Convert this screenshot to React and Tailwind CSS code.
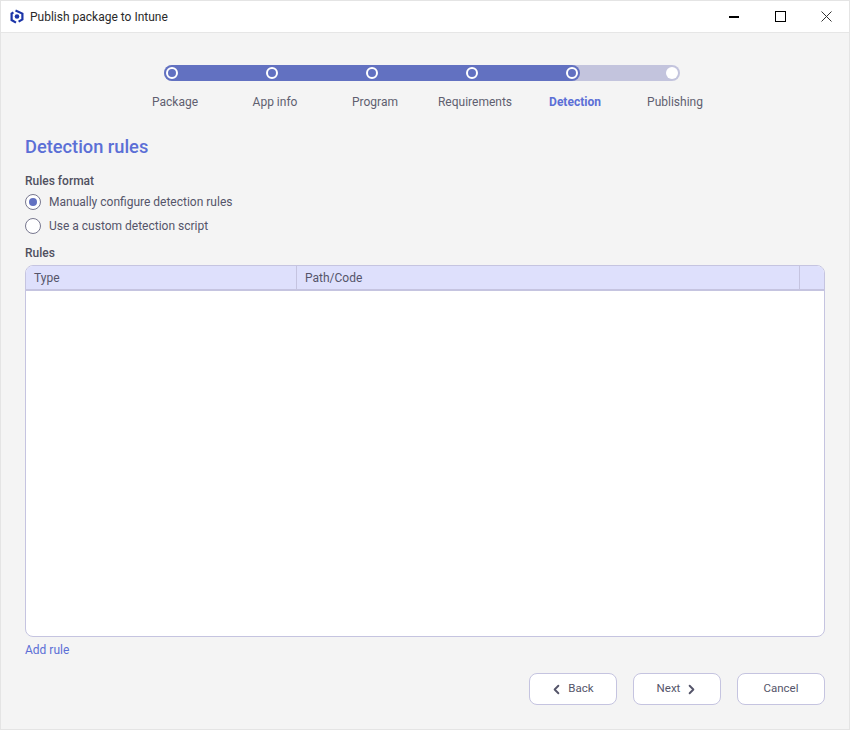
import React from 'react';
import { ChevronLeft, ChevronRight } from 'lucide-react';

const steps = ['Package', 'App info', 'Program', 'Requirements', 'Detection', 'Publishing'];

const Logo = () => (
  <svg width="14" height="15" viewBox="0 0 14 15" fill="none">
    <path d="M5.5 1.6 L12.4 4.6 L12.4 10.4 L8.6 12.6" stroke="#1c35a8" strokeWidth="2.2" />
    <path d="M6 13.6 L1.6 11 L1.6 4.6 L3.4 3.4" stroke="#1c35a8" strokeWidth="2.2" />
    <circle cx="7" cy="7.5" r="2.3" fill="#1c35a8" />
  </svg>
);

const Stepper = () => (
  <div className="flex flex-col">
    <div className="ml-[163px] flex h-4 w-[516px] rounded-full bg-[#c3c4dd]">
      <div className="flex h-4 w-[416px] items-center gap-[88px] rounded-full bg-[#6271c1] pl-[2px]">
        {steps.slice(0, 5).map((s) => (
          <span key={s} className="h-3 w-3 shrink-0 rounded-full border-2 border-white bg-[#6271c1]" />
        ))}
      </div>
      <div className="flex flex-1 items-center justify-end pr-[2px]">
        <span className="h-3 w-3 rounded-full bg-white" />
      </div>
    </div>
    <div className="ml-[124px] mt-[13px] flex">
      {steps.map((s, i) => (
        <div key={s} className={`w-[100px] text-center leading-4 ${i === 4 ? 'font-bold text-[#5b6fd6]' : 'text-[#5f5f70]'}`}>
          {s}
        </div>
      ))}
    </div>
  </div>
);

const Radio = ({ checked, label }) => (
  <label className="flex h-6 items-center gap-2 text-[#55556a]">
    <span className="flex h-4 w-4 items-center justify-center rounded-full border border-[#77778f] bg-white">
      {checked && <span className="h-2 w-2 rounded-full bg-[#6271c1]" />}
    </span>
    {label}
  </label>
);

const Button = ({ children, className }) => (
  <button className={`flex h-8 w-[88px] items-center justify-center gap-1 rounded-lg border border-[#c5c4e0] bg-white text-[11.5px] text-[#55556a] ${className || ''}`}>
    {children}
  </button>
);

export default function App() {
  return (
    <div className="flex h-[730px] w-[850px] flex-col border border-[#e4e4e4] bg-[#f4f4f4] text-[12px] [font-family:Roboto,sans-serif]">
      <div className="flex h-[32px] shrink-0 items-center border-b border-[#e6e6e6] bg-white">
        <div className="ml-[9px] mr-[6px] flex"><Logo /></div>
        <span className="pt-px text-[#2a2a2a]">Publish package to Intune</span>
        <div className="ml-auto flex items-center">
          <div className="flex w-[46px] justify-center"><span className="h-[2px] w-[10px] bg-black" /></div>
          <div className="flex w-[46px] justify-center"><span className="h-[11px] w-[11px] border border-black" /></div>
          <div className="flex w-[46px] justify-center">
            <svg width="11" height="11" viewBox="0 0 11 11" stroke="#333" strokeWidth="1"><path d="M.5.5l10 10M10.5.5l-10 10" /></svg>
          </div>
        </div>
      </div>

      <div className="flex flex-1 flex-col pt-[32px]">
        <Stepper />
        <div className="flex flex-1 flex-col px-[24px]">
          <h1 className="mt-[25px] text-[18.25px] font-medium leading-6 text-[#5b6fd6]">Detection rules</h1>
          <div className="mt-[14px] font-medium leading-4 text-[#505060]">Rules format</div>
          <div className="mt-[1px]">
            <Radio checked label="Manually configure detection rules" />
            <Radio label="Use a custom detection script" />
          </div>
          <div className="mt-[7px] font-medium leading-4 text-[#505060]">Rules</div>
          <div className="mt-[4px] flex h-[372px] flex-col overflow-hidden rounded-lg border border-[#c5c4e0] bg-white">
            <div className="flex h-[25px] shrink-0 border-b-2 border-[#c5c4e0] bg-[#dee0fc] text-[#55556a]">
              <div className="flex w-[271px] items-center border-r border-[#c5c4e0] pl-2">Type</div>
              <div className="flex flex-1 items-center border-r border-[#c5c4e0] pl-2">Path/Code</div>
              <div className="w-[24px]" />
            </div>
          </div>
          <a className="mt-[5px] leading-4 text-[#5b6fd6]">Add rule</a>
          <div className="mt-[15px] flex justify-end gap-4">
            <Button className="pr-[3px]"><ChevronLeft size={15} strokeWidth={3} />Back</Button>
            <Button className="pl-[2px]">Next<ChevronRight size={15} strokeWidth={3} /></Button>
            <Button>Cancel</Button>
          </div>
        </div>
      </div>
    </div>
  );
}
